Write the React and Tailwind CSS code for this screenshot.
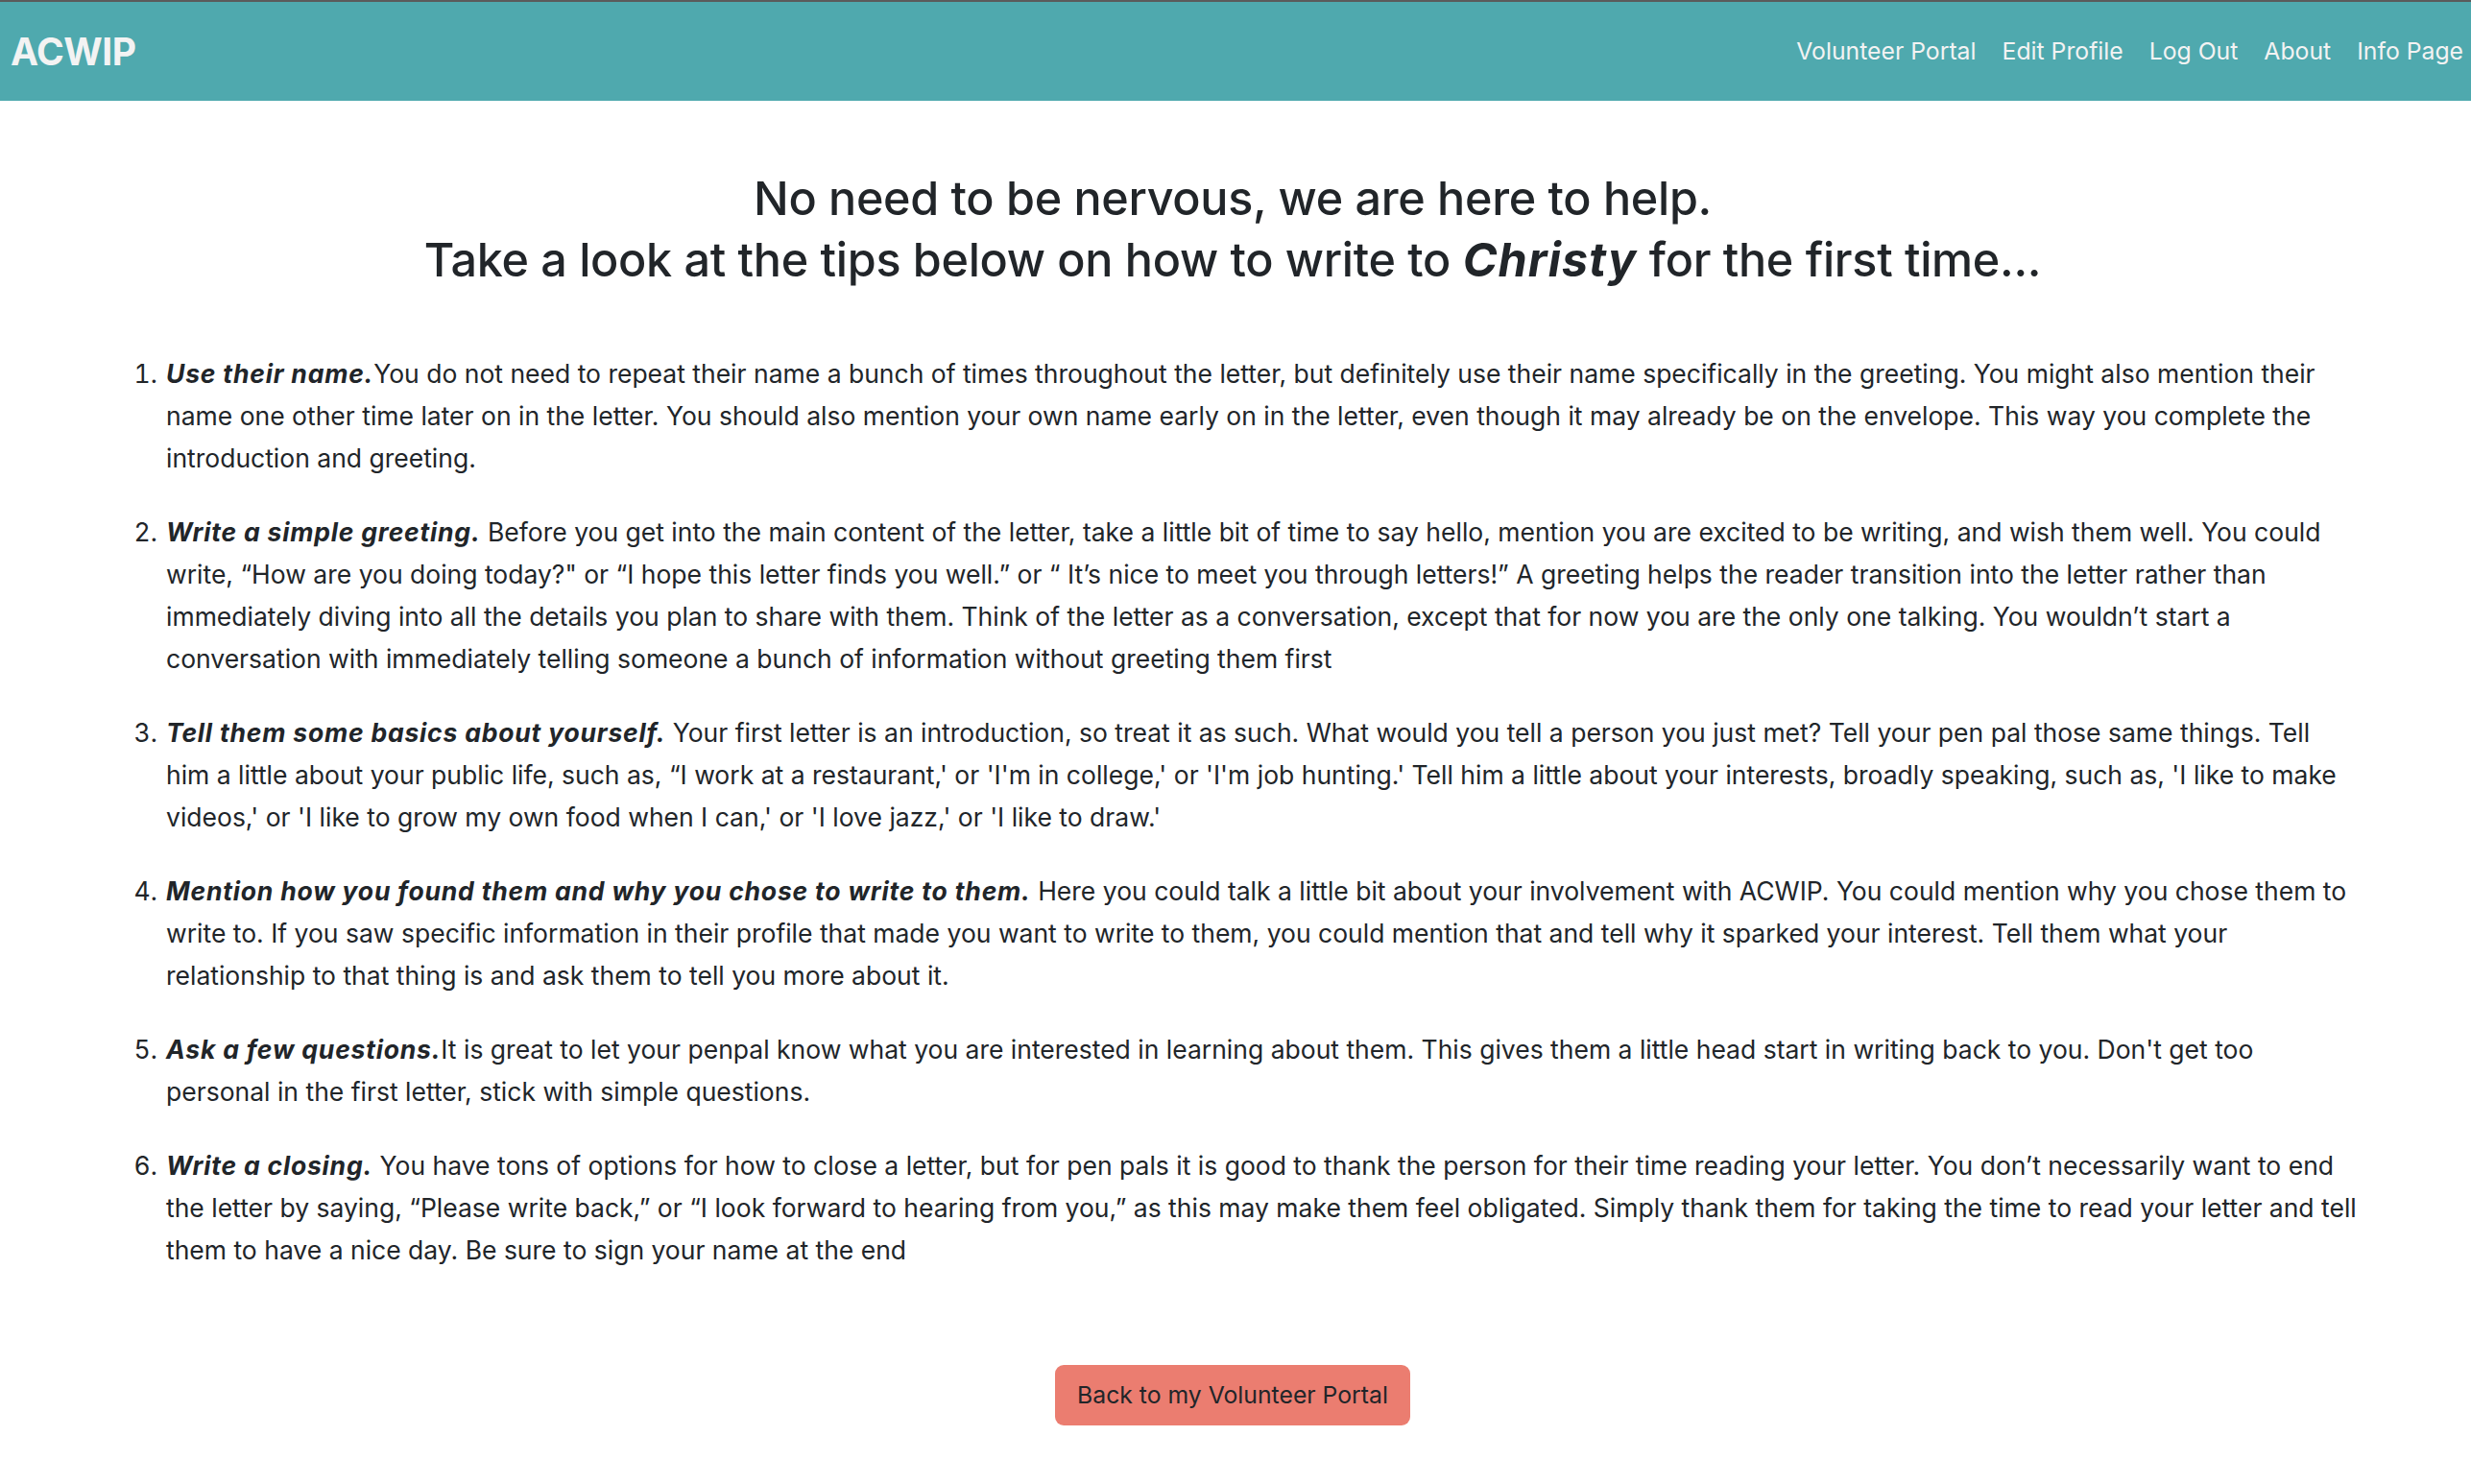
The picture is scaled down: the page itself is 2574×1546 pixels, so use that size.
import React from "react";

const tips = [
  {
    title: "Use their name.",
    sep: "",
    body: "You do not need to repeat their name a bunch of times throughout the letter, but definitely use their name specifically in the greeting. You might also mention their name one other time later on in the letter. You should also mention your own name early on in the letter, even though it may already be on the envelope. This way you complete the introduction and greeting.",
  },
  {
    title: "Write a simple greeting.",
    sep: " ",
    body: "Before you get into the main content of the letter, take a little bit of time to say hello, mention you are excited to be writing, and wish them well. You could write, \u201cHow are you doing today?\" or \u201cI hope this letter finds you well.\u201d or \u201c It\u2019s nice to meet you through letters!\u201d A greeting helps the reader transition into the letter rather than immediately diving into all the details you plan to share with them. Think of the letter as a conversation, except that for now you are the only one talking. You wouldn\u2019t start a conversation with immediately telling someone a bunch of information without greeting them first",
  },
  {
    title: "Tell them some basics about yourself.",
    sep: " ",
    body: "Your first letter is an introduction, so treat it as such. What would you tell a person you just met? Tell your pen pal those same things. Tell him a little about your public life, such as, \u201cI work at a restaurant,' or 'I'm in college,' or 'I'm job hunting.' Tell him a little about your interests, broadly speaking, such as, 'I like to make videos,' or 'I like to grow my own food when I can,' or 'I love jazz,' or 'I like to draw.'",
  },
  {
    title: "Mention how you found them and why you chose to write to them.",
    sep: " ",
    body: "Here you could talk a little bit about your involvement with ACWIP. You could mention why you chose them to write to. If you saw specific information in their profile that made you want to write to them, you could mention that and tell why it sparked your interest. Tell them what your relationship to that thing is and ask them to tell you more about it.",
  },
  {
    title: "Ask a few questions.",
    sep: "",
    body: "It is great to let your penpal know what you are interested in learning about them. This gives them a little head start in writing back to you. Don't get too personal in the first letter, stick with simple questions.",
  },
  {
    title: "Write a closing.",
    sep: " ",
    body: "You have tons of options for how to close a letter, but for pen pals it is good to thank the person for their time reading your letter. You don\u2019t necessarily want to end the letter by saying, \u201cPlease write back,\u201d or \u201cI look forward to hearing from you,\u201d as this may make them feel obligated. Simply thank them for taking the time to read your letter and tell them to have a nice day. Be sure to sign your name at the end",
  },
];

const links = ["Volunteer Portal", "Edit Profile", "Log Out", "About", "Info Page"];

export default function App() {
  return (
    <div className="min-h-screen bg-white text-[#212529] font-['Inter',sans-serif]">
      <nav className="flex h-[105px] items-center justify-between border-t-2 border-[#5b5b5b] bg-[#4fa9ae] pl-[11px] pr-[8px]">
        <span className="text-[39px] font-bold leading-none tracking-[-0.5px] text-[#f3f3f3]">ACWIP</span>
        <ul className="flex items-center gap-[27px] text-[24.75px] text-[#f3f3f3]">
          {links.map((l) => (
            <li key={l}>{l}</li>
          ))}
        </ul>
      </nav>

      <main className="pl-[112px] pr-[118px] pt-[70px] pb-[60px]">
        <h3 className="text-center text-[48.5px] font-medium leading-[64px] tracking-[-0.3px]">
          No need to be nervous, we are here to help.
          <br />
          Take a look at the tips below on how to write to{" "}
          <b className="font-bold italic tracking-[1px]">Christy</b> for the first time...
        </h3>

        <ol className="mt-[64px] list-decimal pl-[59px] text-[26.5px] leading-[44px]">
          {tips.map((t) => (
            <li key={t.title} className="mb-[33px] pl-[2px]">
              <b className="font-bold italic tracking-[0.8px]">{t.title}</b>
              {t.sep}
              {t.body}
            </li>
          ))}
        </ol>

        <div className="mt-[98px] flex justify-center">
          <button className="h-[63px] rounded-[9px] bg-[#eb7d70] px-[23px] text-[24.75px] text-[#212529]">
            Back to my Volunteer Portal
          </button>
        </div>
      </main>
    </div>
  );
}
